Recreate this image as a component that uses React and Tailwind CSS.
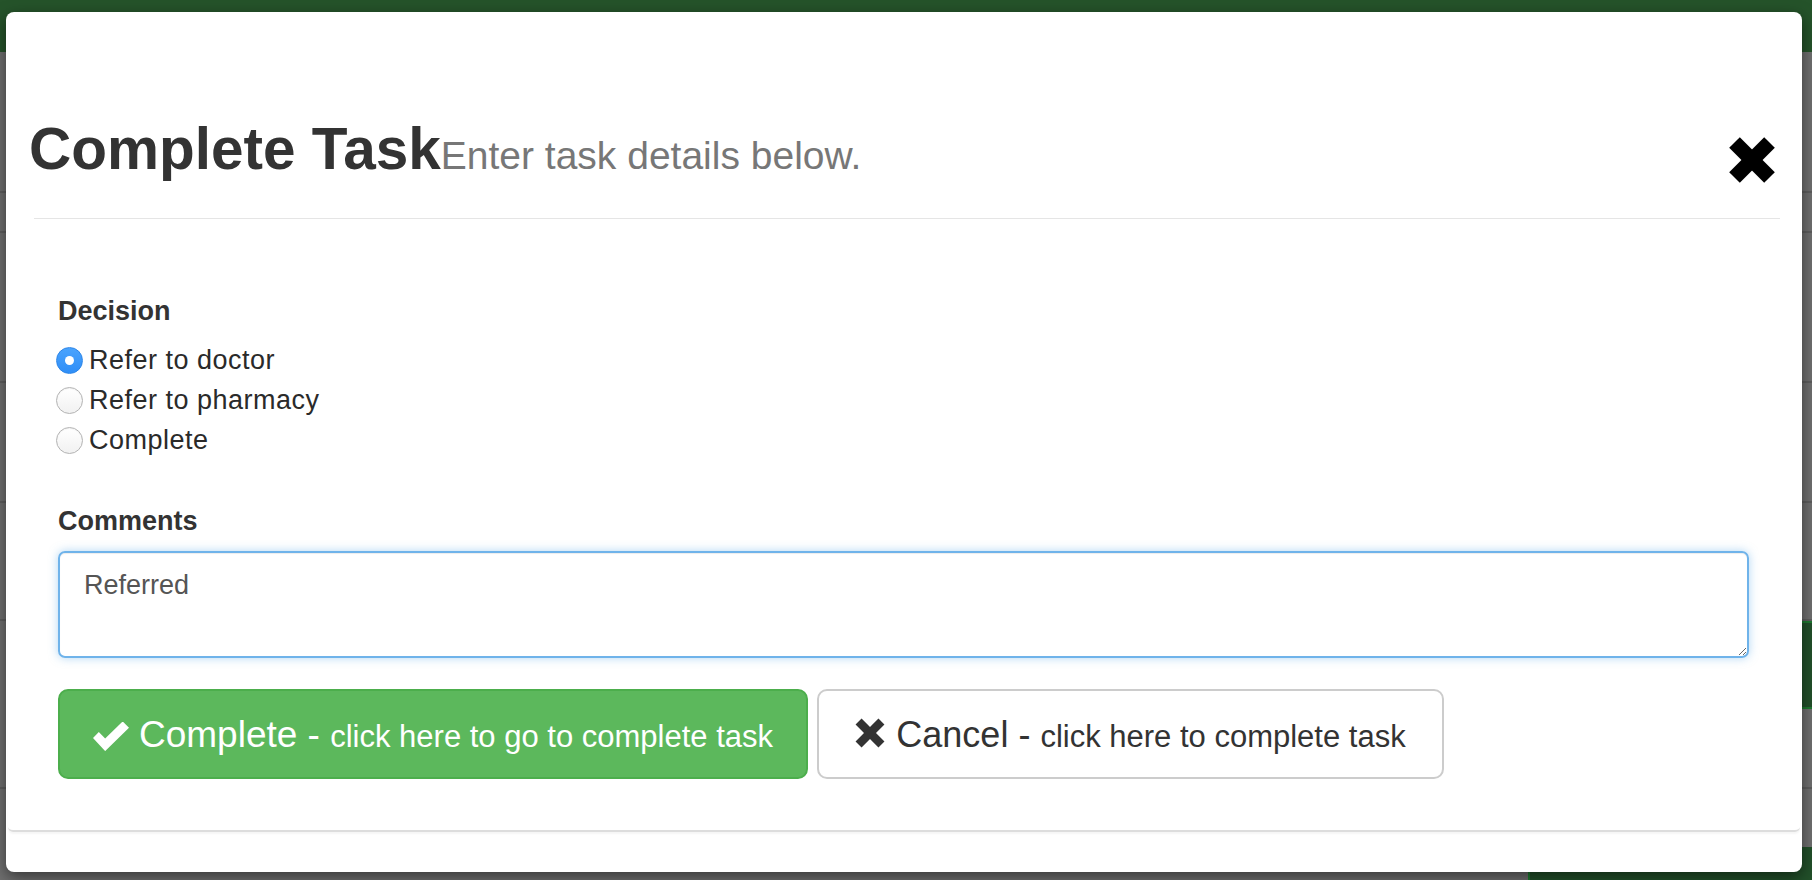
import React, { useState } from 'react';

const options = ['Refer to doctor', 'Refer to pharmacy', 'Complete'];

const CrossIcon = ({ size, color, stroke }) => (
  <svg width={size} height={size} viewBox="0 0 46 46" className="block shrink-0">
    <line x1="5.5" y1="5.5" x2="40.5" y2="40.5" stroke={color} strokeWidth={stroke} />
    <line x1="40.5" y1="5.5" x2="5.5" y2="40.5" stroke={color} strokeWidth={stroke} />
  </svg>
);

const CheckIcon = () => (
  <svg width="36" height="29" viewBox="0 0 37 29" className="block shrink-0">
    <polygon points="0,16 6,10 12.5,16.5 30.5,-1 37,5.5 12.5,29.5" fill="#fff" />
  </svg>
);

const App = () => {
  const [decision, setDecision] = useState(0);

  return (
    <div className="relative w-full h-[880px] overflow-hidden bg-[#6f6f6f] font-['Liberation_Sans',Helvetica,Arial,sans-serif]">
      {/* page behind the backdrop */}
      <div className="h-[52px] bg-[#25532a]" />
      <div className="flex flex-col">
        <div className="h-[141px] border-b-2 border-[#5e5e5e]" />
        <div className="h-[40px] border-b-2 border-[#5e5e5e]" />
        <div className="h-[150px] border-b-2 border-[#5e5e5e]" />
        <div className="h-[120px] border-b-2 border-[#5e5e5e]" />
        <div className="h-[118px] border-b-2 border-[#5e5e5e]" />
        <div className="flex justify-end h-[88px]">
          <div className="w-[20px] bg-[#22502a] border-y-2 border-[#1e7a30]" />
        </div>
        <div className="h-[80px] border-b-2 border-[#5e5e5e]" />
        <div className="flex justify-end h-[60px] mt-[58px]">
          <div className="w-[284px] bg-[#22502a] border-l-2 border-[#1e7a30]" />
        </div>
      </div>

      {/* modal */}
      <div className="absolute left-[6px] top-[12px] w-[1796px] h-[860px] bg-white rounded-[8px] shadow-[0_5px_15px_rgba(0,0,0,0.5)]">
        <div className="ml-[28px] mr-[22px] border-b border-[#e5e5e5] pt-[103px] pb-[35px] flex justify-between items-start">
          <div className="flex items-baseline h-[67px] -ml-[5px]">
            <h1 className="text-[58.5px] leading-[67px] text-[#333] font-bold">Complete Task</h1>
            <span className="text-[39px] leading-[40px] text-[#777]">Enter task details below.</span>
          </div>
          <button className="mt-[22px] mr-[5px]" aria-label="Close">
            <CrossIcon size={46} color="#000" stroke={15} />
          </button>
        </div>

        <div className="mx-[2px] rounded-b-[5px] border-b-2 border-[#dddddd] shadow-[0_2px_2px_rgba(0,0,0,0.04)] pl-[50px] pr-[51px] pt-[76px] pb-[51px]">
          <div className="text-[27px] leading-[32px] font-bold text-[#333]">Decision</div>
          <div className="mt-[13px] flex flex-col">
            {options.map((opt, i) => (
              <label
                key={opt}
                className="flex items-center h-[40px] gap-[6px] -ml-[2px] cursor-pointer"
                onClick={() => setDecision(i)}
              >
                {decision === i ? (
                  <span className="w-[27px] h-[27px] rounded-full bg-[linear-gradient(#4aa3fd,#2f8ef7)] border border-[#2d86e8] flex items-center justify-center">
                    <span className="w-[9px] h-[9px] rounded-full bg-white" />
                  </span>
                ) : (
                  <span className="w-[27px] h-[27px] rounded-full bg-[linear-gradient(#ffffff,#f1f1f1)] border border-[#b3b3b3] shadow-[inset_0_1px_1px_rgba(0,0,0,0.05)]" />
                )}
                <span className="text-[27px] leading-[40px] tracking-[0.5px] text-[#2a2a2a]">{opt}</span>
              </label>
            ))}
          </div>

          <div className="mt-[45px] text-[27px] leading-[32px] font-bold text-[#333]">Comments</div>
          <textarea
            defaultValue="Referred"
            className="mt-[14px] block w-full h-[107px] border-2 border-[#6fb3ea] rounded-[7px] shadow-[inset_0_1px_1px_rgba(0,0,0,0.075),0_0_10px_rgba(102,175,233,0.5)] px-[24px] pt-[13px] text-[27px] leading-[38px] text-[#555] outline-none resize-y"
          />

          <div className="mt-[31px] flex gap-[9px]">
            <button className="w-[750px] h-[90px] flex items-center justify-center bg-[#5cb85c] border-2 border-[#4cae4c] rounded-[10px] text-white">
              <span className="mt-[4px] mr-[10px]">
                <CheckIcon />
              </span>
              <span className="mt-[9px] leading-[38px] whitespace-nowrap">
                <span className="text-[37px]">Complete - </span>
                <span className="text-[31px]">click here to go to complete task</span>
              </span>
            </button>
            <button className="w-[627px] h-[90px] flex items-center justify-center bg-white border-2 border-[#cccccc] rounded-[10px] text-[#333]">
              <span className="-mt-[2px] mr-[11px]">
                <CrossIcon size={30} color="#333" stroke={13} />
              </span>
              <span className="mt-[9px] leading-[38px] whitespace-nowrap">
                <span className="text-[36px]">Cancel - </span>
                <span className="text-[31px]">click here to complete task</span>
              </span>
            </button>
          </div>
        </div>
      </div>
    </div>
  );
};

export default App;
